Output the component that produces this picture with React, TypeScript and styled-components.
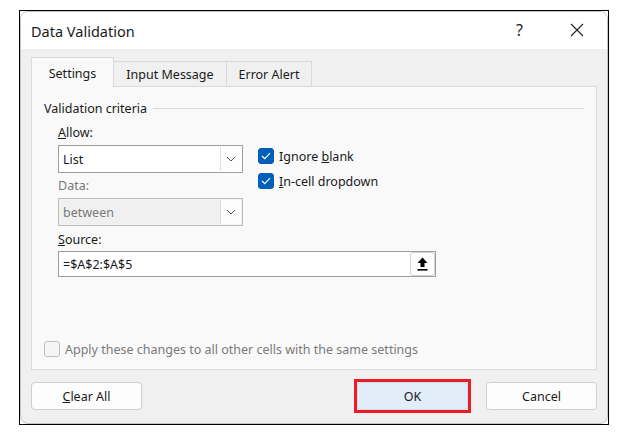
import * as React from "react";
import styled, { createGlobalStyle } from "styled-components";

const GlobalStyle = createGlobalStyle`
  html, body {
    margin: 0;
    padding: 0;
    background: #ffffff;
  }
  body {
    font-family: "Noto Sans", "Open Sans", sans-serif;
    font-size: 12.5px;
    color: #1a1a1a;
  }
`;

const Frame = styled.div`
  box-sizing: border-box;
  margin: 10px 0 0 19px;
  width: 590px;
  height: 415px;
  border: 1px solid #000;
  background: #fff;
`;

const Dialog = styled.div`
  box-sizing: border-box;
  height: 100%;
  border: 1px solid #c4c4c4;
  border-radius: 8px;
  overflow: hidden;
  display: flex;
  flex-direction: column;
  background: #f0f0f0;
`;

const TitleBar = styled.div`
  height: 37px;
  background: #fff;
  display: flex;
  align-items: center;
  padding: 0 2px 0 10px;
`;

const Title = styled.span`
  font-size: 14.5px;
  color: #1a1a1a;
  flex: 1;
`;

const TitleButton = styled.span`
  width: 57px;
  height: 37px;
  display: flex;
  align-items: center;
  justify-content: center;
  font-size: 16px;
  color: #222;
  padding-bottom: 1px;
  box-sizing: border-box;
`;

const Body = styled.div`
  flex: 1;
  padding: 9px 10px 12px;
  display: flex;
  flex-direction: column;
`;

const TabStrip = styled.div`
  display: flex;
  align-items: flex-end;
  height: 29px;
  position: relative;
  z-index: 1;
  margin-bottom: -1px;
`;

const Tab = styled.div<{ $active?: boolean; $w: number }>`
  box-sizing: border-box;
  width: ${(p) => p.$w}px;
  height: ${(p) => (p.$active ? 30 : 26)}px;
  border: 1px solid #dadada;
  border-bottom: ${(p) => (p.$active ? "none" : "1px solid #dadada")};
  background: ${(p) => (p.$active ? "#f9f9f9" : "#f0f0f0")};
  display: flex;
  align-items: center;
  justify-content: center;
  padding-top: ${(p) => (p.$active ? 1 : 0)}px;
  margin-right: -1px;
  color: #1a1a1a;
`;

const Panel = styled.div`
  box-sizing: border-box;
  height: 284px;
  border: 1px solid #dadada;
  background: #f9f9f9;
  padding: 11px 12px 10px;
  display: flex;
  flex-direction: column;
`;

const GroupHeader = styled.div`
  height: 20px;
  display: flex;
  align-items: center;
  gap: 6px;
`;

const GroupRule = styled.span`
  flex: 1;
  height: 1px;
  background: #dcdcdc;
`;

const Indent = styled.div`
  padding-left: 14px;
  margin-top: 6px;
`;

const CriteriaRow = styled.div`
  display: flex;
  gap: 15px;
`;

const Column = styled.div`
  display: flex;
  flex-direction: column;
`;

const Label = styled.div<{ $dim?: boolean; $gap: number; $after?: number }>`
  height: 18px;
  line-height: 18px;
  margin-top: ${(p) => p.$gap}px;
  margin-bottom: ${(p) => p.$after ?? 3}px;
  color: ${(p) => (p.$dim ? "#7a7a7a" : "#1a1a1a")};
`;

const Combo = styled.div<{ $disabled?: boolean }>`
  box-sizing: border-box;
  width: 185px;
  height: 28px;
  border: 1px solid ${(p) => (p.$disabled ? "#bdbdbd" : "#9e9e9e")};
  background: ${(p) => (p.$disabled ? "#f0f0f0" : "#fff")};
  display: flex;
  align-items: stretch;
  color: ${(p) => (p.$disabled ? "#7a7a7a" : "#1a1a1a")};
`;

const ComboText = styled.span`
  flex: 1;
  display: flex;
  align-items: center;
  padding-left: 4px;
`;

const ComboButton = styled.span`
  width: 20px;
  margin: 1px;
  background: #fdfdfd;
  border-left: 1px solid #dcdcdc;
  display: flex;
  align-items: center;
  justify-content: center;
`;

const Checks = styled.div`
  padding-top: 22px;
  display: flex;
  flex-direction: column;
  gap: 5px;
`;

const CheckRow = styled.div<{ $dim?: boolean }>`
  height: 20px;
  display: flex;
  align-items: center;
  gap: 5px;
  color: ${(p) => (p.$dim ? "#7a7a7a" : "#1a1a1a")};
`;

const Box = styled.span<{ $checked?: boolean }>`
  box-sizing: border-box;
  width: 16px;
  height: 16px;
  border-radius: 3px;
  background: ${(p) => (p.$checked ? "#005fb8" : "#f5f5f5")};
  border: 1px solid ${(p) => (p.$checked ? "#005fb8" : "#bfbfbf")};
  display: flex;
  align-items: center;
  justify-content: center;
`;

const SourceField = styled.div`
  box-sizing: border-box;
  width: 378px;
  height: 26px;
  border: 1px solid #9e9e9e;
  background: #fff;
  display: flex;
  align-items: center;
  padding-left: 4px;
`;

const SourceText = styled.span`
  flex: 1;
`;

const RefButton = styled.span`
  box-sizing: border-box;
  width: 25px;
  height: 24px;
  border: 1px solid #cfcfcf;
  border-radius: 3px;
  background: #fdfdfd;
  display: flex;
  align-items: center;
  justify-content: center;
`;

const ApplyRow = styled.div`
  margin-top: auto;
`;

const ButtonRow = styled.div`
  margin-top: 12px;
  display: flex;
  align-items: center;
`;

const Spacer = styled.span`
  flex: 1;
`;

const Button = styled.button<{ $primary?: boolean }>`
  box-sizing: border-box;
  width: 111px;
  height: 28px;
  border: 1px solid ${(p) => (p.$primary ? "#c9dcec" : "#d0d0d0")};
  border-radius: 4px;
  background: ${(p) => (p.$primary ? "#e1edf8" : "#fdfdfd")};
  font-family: inherit;
  font-size: 12.5px;
  color: #1a1a1a;
  padding: 1px 0 0;
`;

const Highlight = styled.span`
  display: flex;
  margin: -3px 0;
  border: 3px solid #ed1c24;
  margin-right: 15px;
`;

const Chevron = () => (
  <svg width="10" height="6" viewBox="0 0 10 6">
    <path d="M1 1 L5 5 L9 1" fill="none" stroke="#555" strokeWidth="1" />
  </svg>
);

const Tick = () => (
  <svg width="10" height="8" viewBox="0 0 10 8">
    <path d="M1 4 L3.8 6.6 L9 1.2" fill="none" stroke="#fff" strokeWidth="1.2" />
  </svg>
);

const UploadIcon = () => (
  <svg width="11" height="14" viewBox="0 0 11 14">
    <path d="M5.5 0.5 L10.5 6 L7.5 6 L7.5 10 L3.5 10 L3.5 6 L0.5 6 Z" fill="#000" />
    <rect x="0.5" y="12" width="10" height="1.6" fill="#000" />
  </svg>
);

const CloseIcon = () => (
  <svg width="14" height="14" viewBox="0 0 14 14">
    <path d="M1 1 L13 13 M13 1 L1 13" stroke="#222" strokeWidth="1.1" />
  </svg>
);

export default function App() {
  return (
    <>
      <GlobalStyle />
      <Frame>
        <Dialog>
          <TitleBar>
            <Title>Data Validation</Title>
            <TitleButton>?</TitleButton>
            <TitleButton>
              <CloseIcon />
            </TitleButton>
          </TitleBar>
          <Body>
            <TabStrip>
              <Tab $active $w={83}>
                Settings
              </Tab>
              <Tab $w={114}>Input Message</Tab>
              <Tab $w={86}>Error Alert</Tab>
            </TabStrip>
            <Panel>
              <GroupHeader>
                <span>Validation criteria</span>
                <GroupRule />
              </GroupHeader>
              <Indent>
                <CriteriaRow>
                  <Column>
                    <Label $gap={0}>
                      <u>A</u>llow:
                    </Label>
                    <Combo>
                      <ComboText>List</ComboText>
                      <ComboButton>
                        <Chevron />
                      </ComboButton>
                    </Combo>
                    <Label $dim $gap={4}>
                      Data:
                    </Label>
                    <Combo $disabled>
                      <ComboText>between</ComboText>
                      <ComboButton>
                        <Chevron />
                      </ComboButton>
                    </Combo>
                  </Column>
                  <Checks>
                    <CheckRow>
                      <Box $checked>
                        <Tick />
                      </Box>
                      <span>
                        Ignore <u>b</u>lank
                      </span>
                    </CheckRow>
                    <CheckRow>
                      <Box $checked>
                        <Tick />
                      </Box>
                      <span>
                        <u>I</u>n-cell dropdown
                      </span>
                    </CheckRow>
                  </Checks>
                </CriteriaRow>
                <Label $gap={5} $after={2}>
                  <u>S</u>ource:
                </Label>
                <SourceField>
                  <SourceText>=$A$2:$A$5</SourceText>
                  <RefButton>
                    <UploadIcon />
                  </RefButton>
                </SourceField>
              </Indent>
              <ApplyRow>
                <CheckRow $dim>
                  <Box />
                  <span>Apply these changes to all other cells with the same settings</span>
                </CheckRow>
              </ApplyRow>
            </Panel>
            <ButtonRow>
              <Button>
                <u>C</u>lear All
              </Button>
              <Spacer />
              <Highlight>
                <Button $primary>OK</Button>
              </Highlight>
              <Button>Cancel</Button>
            </ButtonRow>
          </Body>
        </Dialog>
      </Frame>
    </>
  );
}
